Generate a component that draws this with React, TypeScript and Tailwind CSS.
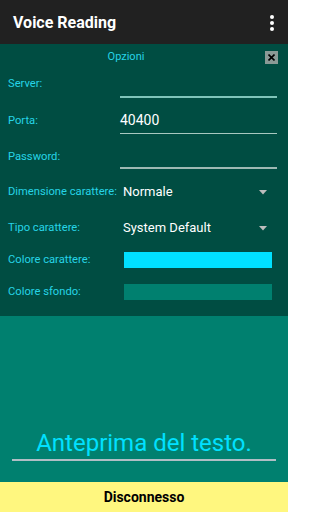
import React from "react";

const Label = ({ children }: { children: React.ReactNode }) => (
  <div className="w-[112px] shrink-0 text-[11.2px] text-[#26d4e6] whitespace-nowrap">{children}</div>
);

function Arrow() {
  return (
    <svg width="8" height="5" viewBox="0 0 8 5" className="mr-[13px]">
      <polygon points="0,0 8,0 4,4.5" fill="#bdbdbd" />
    </svg>
  );
}

export default function App() {
  return (
    <div className="w-[288px] h-[512px] flex flex-col overflow-hidden" style={{ fontFamily: "Roboto, 'Noto Sans', sans-serif" }}>
      <div className="h-[44px] bg-[#212121] flex items-center justify-between px-[13px] pt-[2px] shrink-0">
        <div className="text-white text-[16px] font-bold">Voice Reading</div>
        <div className="flex flex-col gap-[2px] mr-[1px]">
          <div className="w-[4px] h-[4px] rounded-full bg-white" />
          <div className="w-[4px] h-[4px] rounded-full bg-white" />
          <div className="w-[4px] h-[4px] rounded-full bg-white" />
        </div>
      </div>
      <div className="h-[272px] bg-[#004d42] shrink-0 flex flex-col px-[8px]">
        <div className="h-[26px] flex items-center relative">
          <div className="w-full text-center text-[11px] text-[#26d4e6] pr-[36px]">Opzioni</div>
          <div className="absolute right-[2px] top-[7px] w-[13px] h-[13px] bg-[#8a9a96] flex items-center justify-center">
            <svg width="7" height="7" viewBox="0 0 7 7">
              <path d="M0.5 0.5L6.5 6.5M6.5 0.5L0.5 6.5" stroke="#000" strokeWidth="1.6" />
            </svg>
          </div>
        </div>
        <div className="h-[36px] flex items-start pt-[6px]">
          <Label>Server:</Label>
          <div className="flex-1 h-[18px] mt-[4px] border-b-2 border-[#7fc4b9] mr-[3px]" />
        </div>
        <div className="h-[36px] flex items-start pt-[7px]">
          <Label>Porta:</Label>
          <div className="flex-1 h-[22px] -mt-[1px] border-b border-[#a8c8c0] mr-[3px] text-white text-[14px] leading-[16px]">40400</div>
        </div>
        <div className="h-[36px] flex items-start pt-[7px]">
          <Label>Password:</Label>
          <div className="flex-1 h-[15px] mt-[5px] border-b-2 border-[#9db9b3] mr-[3px]" />
        </div>
        <div className="h-[36px] flex items-center -mt-[4px]">
          <Label>Dimensione carattere:</Label>
          <div className="flex-1 flex items-center justify-between pl-[3px] text-white text-[13px]">
            <span>Normale</span>
            <Arrow />
          </div>
        </div>
        <div className="h-[36px] flex items-center">
          <Label>Tipo carattere:</Label>
          <div className="flex-1 flex items-center justify-between pl-[3px] text-white text-[13px]">
            <span>System Default</span>
            <Arrow />
          </div>
        </div>
        <div className="h-[32px] flex items-center -mt-[2px]">
          <Label>Colore carattere:</Label>
          <div className="ml-[4px] w-[148px] h-[16px] bg-[#00e1ff]" />
        </div>
        <div className="h-[32px] flex items-center">
          <Label>Colore sfondo:</Label>
          <div className="ml-[4px] w-[148px] h-[16px] bg-[#00806f]" />
        </div>
      </div>
      <div className="flex-1 bg-[#00806f] flex flex-col justify-end items-center pb-[21px]">
        <div className="w-[264px] text-center text-[24px] text-[#00e1ff] leading-[30px] border-b-2 border-[#b0bec5] pb-[1px]">
          Anteprima del testo.
        </div>
      </div>
      <div className="h-[30px] bg-[#fff77f] flex items-center justify-center shrink-0">
        <span className="text-[14px] font-bold text-black">Disconnesso</span>
      </div>
    </div>
  );
}
